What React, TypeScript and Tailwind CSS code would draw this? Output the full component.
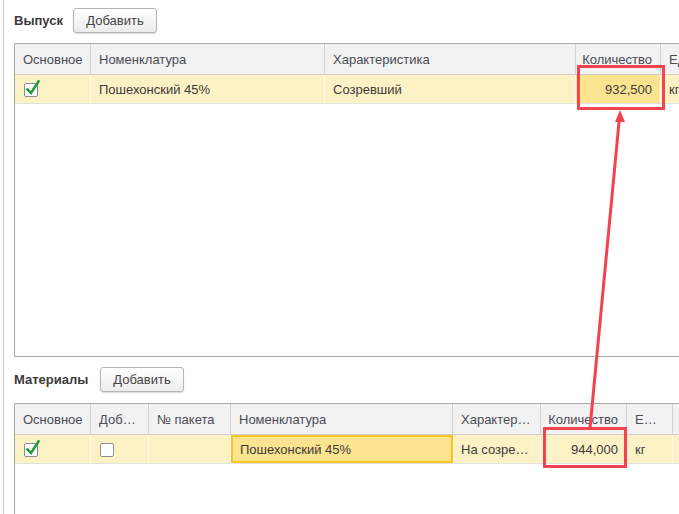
import React from "react";

const font = { fontFamily: '"Liberation Sans", Arial, sans-serif' };

function Check({ checked }: { checked: boolean }) {
  return (
    <div className="relative w-[14px] h-[14px] border border-[#8f8f8f] rounded-[2px] bg-white">
      {checked && (
        <svg className="absolute left-[0px] top-[-5px]" width="16" height="18" viewBox="0 0 16 18">
          <path d="M2.5 10.5 L6 14 L13.5 2.5" fill="none" stroke="#1f9a3c" strokeWidth="2.6" strokeLinecap="square" />
        </svg>
      )}
    </div>
  );
}

function Btn() {
  return (
    <button className="h-[25px] w-[84px] rounded-[3px] border border-[#b5b5b5] bg-gradient-to-b from-white to-[#ececec] text-[13px] text-[#444] shadow-[0_1px_1px_rgba(0,0,0,0.15)]">
      Добавить
    </button>
  );
}

const H = "h-[30px] flex items-center pl-2 pr-2 pt-[1px] border-r border-[#d2d2d2] bg-[#f2f2f2] text-[13px] text-[#4b4b55] whitespace-nowrap overflow-hidden";
const HR = "h-[30px] flex items-center justify-end pl-2 pr-2 pt-[1px] border-r border-[#d2d2d2] bg-[#f2f2f2] text-[13px] text-[#4b4b55] whitespace-nowrap overflow-hidden";
const D = "h-[28px] flex items-center px-2 pt-[2px] border-r border-[#fffaf0] bg-[#fdf2c6] text-[13px] text-[#3a3a3a] whitespace-nowrap overflow-hidden";
const DR = "h-[28px] flex items-center justify-end px-2 pt-[2px] border-r border-[#fffaf0] bg-[#fdf2c6] text-[13px] text-[#3a3a3a] whitespace-nowrap overflow-hidden";
const DHR = "h-[28px] flex items-center justify-end px-2 pt-[2px] border-r border-[#fffaf0] bg-[#fce390] text-[13px] text-[#3a3a3a] whitespace-nowrap overflow-hidden";
const DSEL = "h-[28px] flex items-center pl-[7px] pr-2 pt-[1px] border-2 border-[#f5c425] bg-[#fce390] text-[13px] text-[#3a3a3a] whitespace-nowrap overflow-hidden";
const DC = "h-[28px] flex items-center px-[9px] pt-[1px] border-r border-[#fffaf0] bg-[#fdf2c6]";

export default function App() {
  return (
    <div style={font} className="relative w-[679px] h-[514px] overflow-hidden bg-white">
      <div className="ml-[3px] h-full border-l border-[#c8c8c8] pl-[10px] flex flex-col">
        {/* Выпуск */}
        <div className="flex items-center mt-[8px] h-[25px]">
          <span className="text-[13px] font-bold text-[#3a3a3a] w-[59px]">Выпуск</span>
          <Btn />
        </div>
        <div className="mt-[10px] w-[720px] h-[314px] border border-[#a8a8a8] border-r-0">
          <div className="grid grid-cols-[76px_234px_251px_85px_1fr] border-b border-[#cfcfcf]">
            <div className={H}>Основное</div>
            <div className={H}>Номенклатура</div>
            <div className={H}>Характеристика</div>
            <div className={HR}>Количество</div>
            <div className={H}>Ед</div>
          </div>
          <div className="grid grid-cols-[76px_234px_251px_85px_1fr] border-b border-[#e2e2e2]">
            <div className={DC}><Check checked /></div>
            <div className={D}>Пошехонский 45%</div>
            <div className={D}>Созревший</div>
            <div className={DHR}>932,500</div>
            <div className={D}>кг</div>
          </div>
        </div>

        {/* Материалы */}
        <div className="flex items-center mt-[10px] h-[25px]">
          <span className="text-[13px] font-bold text-[#3a3a3a] w-[86px]">Материалы</span>
          <Btn />
        </div>
        <div className="mt-[11px] w-[720px] flex-1 border border-[#a8a8a8] border-r-0 border-b-0">
          <div className="grid grid-cols-[76px_58px_82px_222px_88px_86px_46px_1fr] border-b border-[#cfcfcf]">
            <div className={H}>Основное</div>
            <div className={H}>Доб…</div>
            <div className={H}>№ пакета</div>
            <div className={H}>Номенклатура</div>
            <div className={H}>Характер…</div>
            <div className={HR}>Количество</div>
            <div className={H}>Е…</div>
            <div className={H}></div>
          </div>
          <div className="grid grid-cols-[76px_58px_82px_222px_88px_86px_46px_1fr] border-b border-[#e2e2e2]">
            <div className={DC}><Check checked /></div>
            <div className={DC}><Check checked={false} /></div>
            <div className={D}></div>
            <div className={DSEL}>Пошехонский 45%</div>
            <div className={D}>На созре…</div>
            <div className={DR}>944,000</div>
            <div className={D}>кг</div>
            <div className={D}></div>
          </div>
        </div>
      </div>

      {/* annotations */}
      <div className="absolute left-[577px] top-[65px] w-[88px] h-[45px] border-[3px] border-[#f2434f]" />
      <div className="absolute left-[543px] top-[427px] w-[84px] h-[41px] border-[3px] border-[#f2434f]" />
      <svg className="absolute left-0 top-0" width="679" height="514">
        <line x1="590" y1="428" x2="619.4" y2="118" stroke="#f2434f" strokeWidth="3" />
        <polygon points="620,110 615,122 625,122" fill="#f2434f" />
      </svg>
    </div>
  );
}
